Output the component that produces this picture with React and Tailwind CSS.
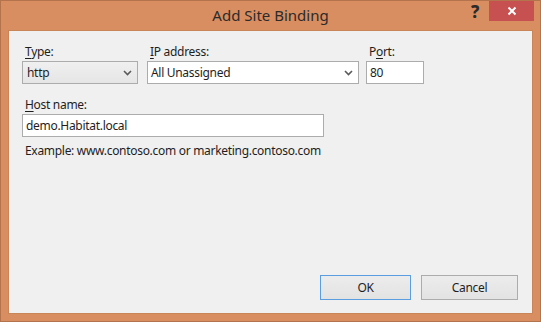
import React from "react";

const font = { fontFamily: '"Segoe UI", "Noto Sans", "Open Sans", sans-serif' };

function Chevron() {
  return (
    <svg width="9" height="6" viewBox="0 0 9 6" className="shrink-0">
      <path d="M1 1 L4.5 4.5 L8 1" fill="none" stroke="#5a5a5a" strokeWidth="1.6" />
    </svg>
  );
}

function Field({ underline, rest, pre = "", width, children }) {
  return (
    <div className="flex flex-col" style={{ width }}>
      <div className="h-[17px] pl-[3px] text-[12px] leading-[16px] text-[#1e1e1e]">
        {pre}
        <span className="underline underline-offset-2">{underline}</span>
        {rest}
      </div>
      {children}
    </div>
  );
}

export default function App() {
  return (
    <div
      className="w-[541px] h-[322px] bg-[#d98e61] border border-[#b3744d] flex flex-col tracking-[-0.3px]"
      style={font}
    >
      <div className="h-[29px] relative flex items-center justify-center">
        <span className="text-[15px] text-[#2b2b2b] tracking-normal">Add Site Binding</span>
        <div className="absolute right-[6px] top-0 flex items-start">
          <span className="w-[30px] h-[22px] flex items-center justify-center text-[17px] font-extrabold text-[#2b2b2b] pl-[2px]">
            ?
          </span>
          <button className="w-[45px] h-[20px] bg-[#c75050] flex items-center justify-center">
            <svg width="10" height="10" viewBox="0 0 10 10">
              <path d="M1.5 1.5 L8.5 8.5 M8.5 1.5 L1.5 8.5" stroke="#fff" strokeWidth="2" />
            </svg>
          </button>
        </div>
      </div>
      <div className="mx-[7px] mb-[7px] flex-1 bg-[#f0f0f0] border border-[#c98457] flex flex-col px-[13px] pt-[13px] pb-[13px]">
        <div className="flex gap-[9px]">
          <Field underline="T" rest="ype:" width="116px">
            <div className="h-[23px] border border-[#acacac] bg-gradient-to-b from-[#f0f0f0] to-[#e5e5e5] flex items-center justify-between pl-[4px] pr-[5px] text-[12px] text-[#1e1e1e]">
              http
              <Chevron />
            </div>
          </Field>
          <div className="flex gap-[7px]">
            <Field underline="I" rest="P address:" width="212px">
              <div className="h-[23px] border border-[#acacac] bg-white flex items-center justify-between pl-[3px] pr-[5px] text-[12px] text-[#1e1e1e]">
                All Unassigned
                <Chevron />
              </div>
            </Field>
            <Field pre="P" underline="o" rest="rt:" width="58px">
              <div className="h-[23px] border border-[#acacac] bg-white flex items-center pl-[3px] text-[12px] text-[#1e1e1e]">
                80
              </div>
            </Field>
          </div>
        </div>
        <div className="mt-[13px]">
          <Field underline="H" rest="ost name:" width="302px">
            <div className="h-[23px] border border-[#acacac] bg-white flex items-center pl-[3px] text-[12px] text-[#1e1e1e]">
              demo.Habitat.local
            </div>
          </Field>
        </div>
        <div className="mt-[6px] pl-[3px] text-[12px] leading-[16px] text-[#1e1e1e]">
          Example: www.contoso.com or marketing.contoso.com
        </div>
        <div className="mt-auto flex justify-end gap-[10px] pr-[1px]">
          <button className="w-[91px] h-[25px] border border-[#5b9de1] bg-gradient-to-b from-[#ececec] to-[#e3e3e3] text-[12px] text-[#1e1e1e]">
            OK
          </button>
          <button className="w-[97px] h-[25px] border border-[#acacac] bg-gradient-to-b from-[#ececec] to-[#e3e3e3] text-[12px] text-[#1e1e1e]">
            Cancel
          </button>
        </div>
      </div>
    </div>
  );
}
